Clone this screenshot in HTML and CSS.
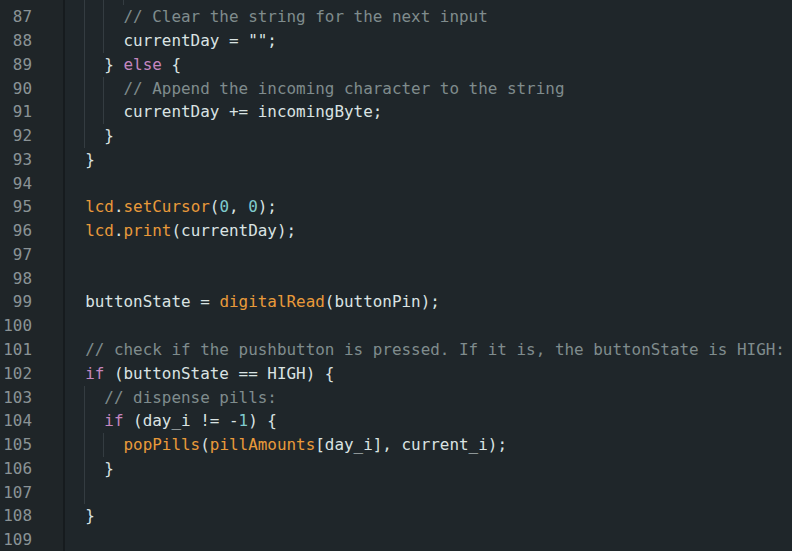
FILE: index.html
```html
<!DOCTYPE html>
<html lang="en">
<head>
<meta charset="utf-8">
<title>sketch.ino</title>
<link rel="stylesheet" href="styles.css">
</head>
<body>
<div class="editor">
  <div class="gutter">
    <div class="ln top"></div>
    <div class="ln">87</div>
    <div class="ln">88</div>
    <div class="ln">89</div>
    <div class="ln">90</div>
    <div class="ln">91</div>
    <div class="ln">92</div>
    <div class="ln">93</div>
    <div class="ln">94</div>
    <div class="ln">95</div>
    <div class="ln">96</div>
    <div class="ln">97</div>
    <div class="ln">98</div>
    <div class="ln">99</div>
    <div class="ln">100</div>
    <div class="ln">101</div>
    <div class="ln">102</div>
    <div class="ln">103</div>
    <div class="ln">104</div>
    <div class="ln">105</div>
    <div class="ln">106</div>
    <div class="ln">107</div>
    <div class="ln">108</div>
    <div class="ln">109</div>
  </div>
  <div class="code">
    <div class="line top g246"></div>
    <div class="line g24">      <span class="cm">// Clear the string for the next input</span></div>
    <div class="line g24">      currentDay = <span class="str">""</span>;</div>
    <div class="line g2">    } <span class="kw">else</span> {</div>
    <div class="line g24">      <span class="cm">// Append the incoming character to the string</span></div>
    <div class="line g24">      currentDay += incomingByte;</div>
    <div class="line g2">    }</div>
    <div class="line">  }</div>
    <div class="line"></div>
    <div class="line">  <span class="fn">lcd</span>.<span class="fn">setCursor</span>(<span class="num">0</span>, <span class="num">0</span>);</div>
    <div class="line">  <span class="fn">lcd</span>.<span class="fn">print</span>(currentDay);</div>
    <div class="line"></div>
    <div class="line"></div>
    <div class="line">  buttonState = <span class="fn">digitalRead</span>(buttonPin);</div>
    <div class="line"></div>
    <div class="line">  <span class="cm">// check if the pushbutton is pressed. If it is, the buttonState is HIGH:</span></div>
    <div class="line">  <span class="kw">if</span> (buttonState == HIGH) {</div>
    <div class="line g2">    <span class="cm">// dispense pills:</span></div>
    <div class="line g2">    <span class="kw">if</span> (day_i != -<span class="num">1</span>) {</div>
    <div class="line g24">      <span class="fn">popPills</span>(<span class="fn">pillAmounts</span>[day_i], current_i);</div>
    <div class="line g2">    }</div>
    <div class="line g2"></div>
    <div class="line">  }</div>
    <div class="line"></div>
  </div>
</div>
</body>
</html>
```

FILE: styles.css
```css
html, body {
  margin: 0;
  padding: 0;
  height: 100%;
  background: #1f262a;
  overflow: hidden;
}

.editor {
  display: flex;
  height: 100%;
  font-family: "DejaVu Sans Mono", "Liberation Mono", monospace;
  font-size: 15.93px;
  line-height: 23.77px;
  color: #dae3e3;
}

.gutter {
  width: 63px;
  flex: none;
  background: #1f2528;
  border-right: 2px solid #161b1e;
  box-sizing: content-box;
}

.ln {
  height: 23.77px;
  padding-right: 31px;
  text-align: right;
  color: #8a9396;
}

.ln.top,
.line.top {
  height: 5.3px;
}

.code {
  flex: 1;
  padding-left: 1px;
  --cw: 9.59px;
}

.line {
  height: 23.77px;
  white-space: pre;
  background-repeat: no-repeat;
}

.g2 {
  background-image: linear-gradient(#343c41, #343c41);
  background-size: 1px 100%;
  background-position: calc(var(--cw) * 2 - 1px) 0;
}

.g24 {
  background-image: linear-gradient(#343c41, #343c41), linear-gradient(#343c41, #343c41);
  background-size: 1px 100%, 1px 100%;
  background-position: calc(var(--cw) * 2 - 1px) 0, calc(var(--cw) * 4 - 1px) 0;
}

.g246 {
  background-image: linear-gradient(#343c41, #343c41), linear-gradient(#343c41, #343c41), linear-gradient(#343c41, #343c41);
  background-size: 1px 100%, 1px 100%, 1px 100%;
  background-position: calc(var(--cw) * 2 - 1px) 0, calc(var(--cw) * 4 - 1px) 0, calc(var(--cw) * 6 - 1px) 0;
}

.cm { color: #7f8c8d; }
.kw { color: #c586c0; }
.fn { color: #e99a3a; }
.num { color: #7fcbcd; }
.str { color: #dae3e3; }
```
